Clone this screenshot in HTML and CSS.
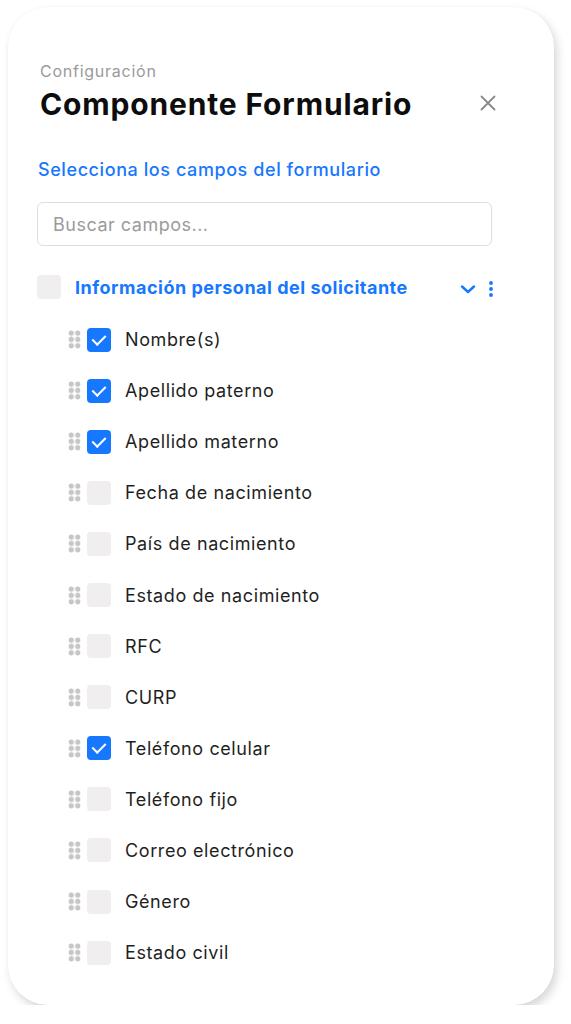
FILE: index.html
```html
<!DOCTYPE html>
<html lang="es">
<head>
<meta charset="utf-8">
<title>Componente Formulario</title>
<link rel="stylesheet" href="styles.css">
</head>
<body>
<div class="card">
  <header class="head">
    <div class="titles">
      <div class="eyebrow">Configuración</div>
      <h1 class="title">Componente Formulario</h1>
    </div>
    <button class="close" aria-label="Cerrar">
      <svg width="16" height="16" viewBox="0 0 16 16"><path d="M1.5 1.5L14.5 14.5M14.5 1.5L1.5 14.5" stroke="#8a8a8a" stroke-width="1.8" stroke-linecap="round" fill="none"/></svg>
    </button>
  </header>

  <p class="subtitle">Selecciona los campos del formulario</p>

  <div class="search">Buscar campos...</div>

  <div class="group">
    <span class="box"></span>
    <span class="group-label">Información personal del solicitante</span>
    <svg class="chev" width="16" height="10" viewBox="0 0 16 10"><path d="M2 2.5L8 8L14 2.5" stroke="#1677ff" stroke-width="2.4" stroke-linecap="round" stroke-linejoin="round" fill="none"/></svg>
    <svg class="kebab" width="4" height="16" viewBox="0 0 4 16"><circle cx="2" cy="2" r="1.9" fill="#1677ff"/><circle cx="2" cy="8" r="1.9" fill="#1677ff"/><circle cx="2" cy="14" r="1.9" fill="#1677ff"/></svg>
  </div>

  <ul class="list">
    <li class="item"><span class="grip"></span><span class="box on"></span><span class="label">Nombre(s)</span></li>
    <li class="item"><span class="grip"></span><span class="box on"></span><span class="label">Apellido paterno</span></li>
    <li class="item"><span class="grip"></span><span class="box on"></span><span class="label">Apellido materno</span></li>
    <li class="item"><span class="grip"></span><span class="box"></span><span class="label">Fecha de nacimiento</span></li>
    <li class="item"><span class="grip"></span><span class="box"></span><span class="label">País de nacimiento</span></li>
    <li class="item"><span class="grip"></span><span class="box"></span><span class="label">Estado de nacimiento</span></li>
    <li class="item"><span class="grip"></span><span class="box"></span><span class="label">RFC</span></li>
    <li class="item"><span class="grip"></span><span class="box"></span><span class="label">CURP</span></li>
    <li class="item"><span class="grip"></span><span class="box on"></span><span class="label">Teléfono celular</span></li>
    <li class="item"><span class="grip"></span><span class="box"></span><span class="label">Teléfono fijo</span></li>
    <li class="item"><span class="grip"></span><span class="box"></span><span class="label">Correo electrónico</span></li>
    <li class="item"><span class="grip"></span><span class="box"></span><span class="label">Género</span></li>
    <li class="item"><span class="grip"></span><span class="box"></span><span class="label">Estado civil</span></li>
  </ul>
</div>
</body>
</html>
```

FILE: styles.css
```css
* { box-sizing: border-box; }

html, body {
  margin: 0;
  padding: 0;
  background: #ffffff;
}

body {
  font-family: Inter, "Noto Sans", "Liberation Sans", sans-serif;
  color: #1f1f1f;
  padding: 7px 0 0 8px;
}

.card {
  width: 546px;
  height: 998px;
  background: #ffffff;
  border-radius: 40px;
  box-shadow: 3px 5px 10px rgba(0, 0, 0, 0.16), 0 0 2px rgba(0, 0, 0, 0.04);
  padding: 54px 62px 0 29px;
}

.head {
  display: flex;
  align-items: flex-start;
  justify-content: space-between;
}

.titles {
  padding-left: 3px;
}

.eyebrow {
  font-size: 16px;
  line-height: 20px;
  color: #9a9a9a;
  letter-spacing: 0.75px;
}

.title {
  margin: 5px 0 0;
  font-size: 30px;
  line-height: 36px;
  font-weight: 700;
  color: #0d0d0d;
  letter-spacing: 0.85px;
}

.close {
  margin: 34px -4px 0 0;
  padding: 0;
  border: 0;
  background: none;
  width: 16px;
  height: 16px;
  display: flex;
}

.subtitle {
  margin: 36px 0 0 1px;
  font-size: 18px;
  line-height: 24px;
  font-weight: 500;
  color: #1677ff;
  letter-spacing: 0.58px;
}

.search {
  margin-top: 20px;
  height: 44px;
  border: 1.5px solid #dedede;
  border-radius: 6px;
  padding: 0 15px;
  display: flex;
  align-items: center;
  font-size: 18px;
  color: #9b9b9b;
  letter-spacing: 0.5px;
}

.group {
  margin-top: 29px;
  height: 24px;
  display: flex;
  align-items: center;
}

.group-label {
  margin-left: 14px;
  font-size: 18px;
  font-weight: 700;
  color: #1677ff;
  flex: 1;
  letter-spacing: 0.5px;
}

.chev {
  margin-right: 13px;
  margin-top: 3px;
}

.kebab {
  margin-right: -1px;
  margin-top: 3px;
}

.box {
  width: 24px;
  height: 24px;
  border-radius: 4px;
  background: #f1eef0;
  flex: none;
  position: relative;
}

.box.on {
  background: #1677ff;
}

.box.on::after {
  content: "";
  position: absolute;
  left: 8px;
  top: 4px;
  width: 6px;
  height: 11px;
  border: solid #ffffff;
  border-width: 0 2px 2px 0;
  transform: rotate(45deg);
}

.list {
  list-style: none;
  margin: 15px 0 0;
  padding: 0 0 0 31px;
}

.item {
  height: 51.1px;
  display: flex;
  align-items: center;
}

.grip {
  width: 13px;
  height: 19px;
  flex: none;
  margin-right: 6px;
  background-image: radial-gradient(circle at center, #c6c6c6 0, #c6c6c6 2.4px, rgba(198, 198, 198, 0) 3px);
  background-size: 6.5px 6.3px;
  background-position: 0 0;
}

.label {
  margin-left: 14px;
  font-size: 18px;
  color: #1f1f1f;
  letter-spacing: 0.6px;
}
```
